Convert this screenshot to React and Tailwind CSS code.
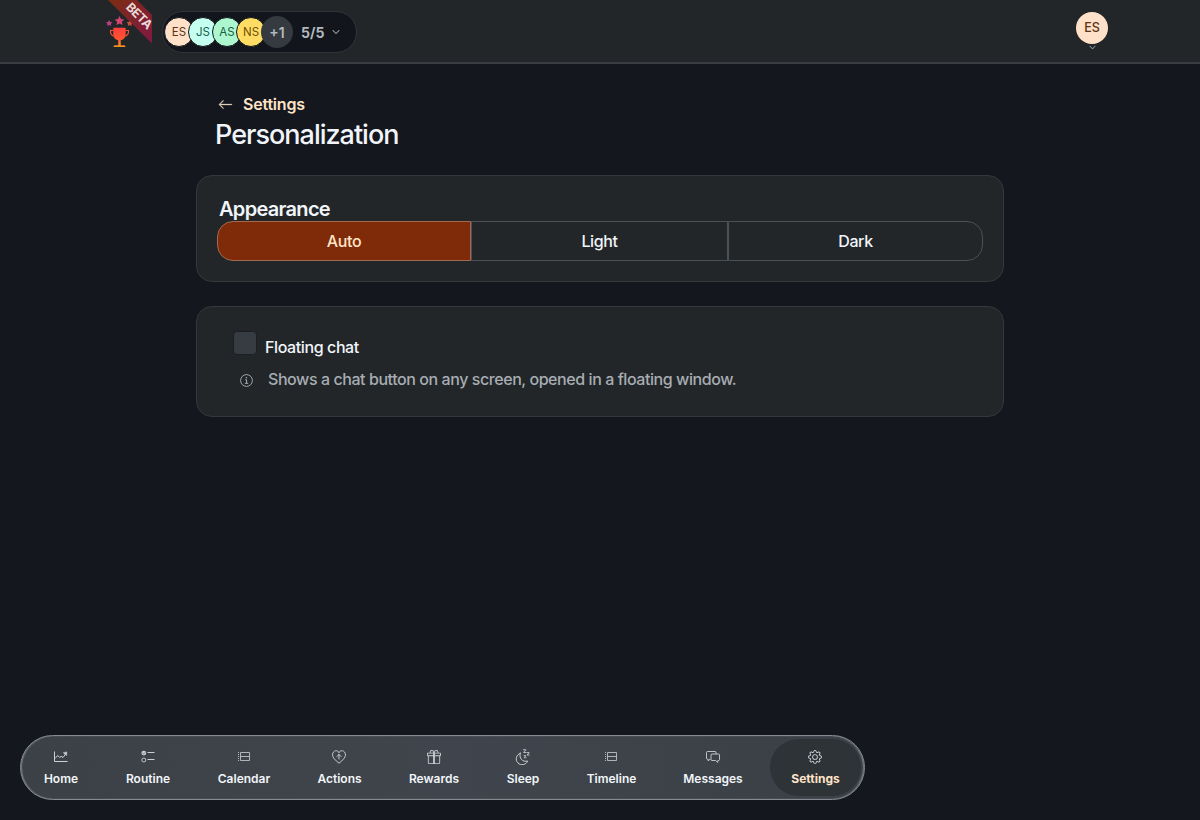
import React, { useState } from 'react';
import { BsArrowLeft, BsGift, BsGear, BsChevronDown } from 'react-icons/bs';

const members = [
  { initials: 'ES', className: 'bg-[#ffe0c8] text-[#5c3210]' },
  { initials: 'JS', className: 'bg-[#c5fff0] text-[#14614f]' },
  { initials: 'AS', className: 'bg-[#adf7d0] text-[#17603e]' },
  { initials: 'NS', className: 'bg-[#ffdd65] text-[#705005]' },
];

const ChartIcon = () => (
  <svg width="14" height="14" viewBox="0 0 14 14" fill="none" stroke="currentColor" strokeLinejoin="round">
    <path d="M.5 1.500v10h13" />
    <path d="M1 8.500l2.700-3 2 2 1.300-1.200L9 7.500l3-4" />
    <path d="M9.300 2.700l3.500-.8-.2 3.700z" fill="currentColor" strokeWidth=".5" />
  </svg>
);

const RoutineIcon = () => (
  <svg width="14" height="14" viewBox="0 0 14 14" fill="none" stroke="currentColor">
    <circle cx="2.8" cy="3.100" r="2.4" fill="currentColor" stroke="none" />
    <path d="M1.700 3.100l.8.800L4 2.400" stroke="#40454c" strokeWidth=".7" />
    <circle cx="2.8" cy="10" r="2" strokeWidth=".9" />
    <path d="M6.500 2.500h7M6.500 9.500h7" />
  </svg>
);

const TimelineIcon = () => (
  <svg width="14" height="14" viewBox="0 0 14 14" fill="none" stroke="currentColor" strokeWidth=".8">
    <path d="M3.500 2.500h9v8h-9zM3.500 6.500h9" />
    <path d="M1.500 2v9" strokeDasharray="1 1" />
  </svg>
);

const HeartIcon = () => (
  <svg width="14" height="14" viewBox="0 0 14 14" fill="none" stroke="currentColor" strokeWidth=".95" strokeLinecap="round" strokeLinejoin="round">
    <path d="M7 2.300C5.700.2 2.900.3 1.500 2c-1.600 2-1 4.500.3 6.200C3.200 10.200 5.200 11.800 7 13.200c1.800-1.400 3.800-3 5.200-5C13.500 6.500 14.100 4 12.500 2 11.100.3 8.300.2 7 2.300z" />
    <path d="M7 9V4.500M4.900 6.500L7 4.400l2.100 2.100" />
  </svg>
);

const SleepIcon = () => (
  <svg width="16" height="16" viewBox="0 0 16 16" fill="none" stroke="currentColor" strokeWidth="1" strokeLinecap="round" strokeLinejoin="round">
    <path d="M5.300 4.200A5.900 5.900 0 1 0 12.600 12c-5 1.500-9-3-7.300-7.800z" />
    <path d="M8.500.7h2.400L8.600 3.500H11M12 3.600h2.200l-2.100 2.400h2.200M9.100 6.600h1.800L9.200 8.700H11" strokeWidth=".85" />
  </svg>
);

const MessagesIcon = () => (
  <svg width="14" height="14" viewBox="0 0 14 14" fill="none" stroke="currentColor" strokeWidth=".9" strokeLinejoin="round">
    <path d="M4.500 9.200H3.800L2.200 11V9.200H1.500A1 1 0 0 1 .5 8.200V2.500a1 1 0 0 1 1-1h7.500a1 1 0 0 1 1 1V4" />
    <path d="M6 4h6.500a1 1 0 0 1 1 1v4.500a1 1 0 0 1-1 1h-.7v2L9.700 10.500H6a1 1 0 0 1-1-1V5a1 1 0 0 1 1-1z" />
  </svg>
);

const InfoIcon = () => (
  <svg className="mt-[3px] mr-[15px] ml-[7px]" width="13" height="13" viewBox="0 0 13 13" fill="none" stroke="currentColor">
    <circle cx="6.500" cy="6.500" r="5.900" strokeWidth=".95" />
    <circle cx="6.400" cy="3.700" r=".8" fill="currentColor" stroke="none" />
    <path d="M5.200 5.800h1.400v3.500M4.900 9.300h3.300" />
  </svg>
);

const navItems = [
  { label: 'Home', icon: ChartIcon, width: 'w-[74px]' },
  { label: 'Routine', icon: RoutineIcon, width: 'w-[84px]' },
  { label: 'Calendar', icon: TimelineIcon, width: 'w-[92px]' },
  { label: 'Actions', icon: HeartIcon, width: 'w-[83px]' },
  { label: 'Rewards', icon: BsGift, width: 'w-[90px]' },
  { label: 'Sleep', icon: SleepIcon, width: 'w-[72px]' },
  { label: 'Timeline', icon: TimelineIcon, width: 'w-[89px]' },
  { label: 'Messages', icon: MessagesIcon, width: 'w-[98px]' },
  { label: 'Settings', icon: BsGear, width: 'w-[91px]' },
];

const Logo = () => (
  <svg width="30" height="34" viewBox="0 0 30 34" fill="none">
    <defs>
      <linearGradient id="cup" x1="0" y1="0" x2="0" y2="1">
        <stop offset="0" stopColor="#ff3f3d" />
        <stop offset=".6" stopColor="#ff542f" />
        <stop offset="1" stopColor="#ee961c" />
      </linearGradient>
    </defs>
    <path d="M14.500 1l1.500 3 3.300.5-2.400 2.300.6 3.300-3-1.600-3 1.600.6-3.300L9.700 4.500l3.300-.5z" fill="#d24571" />
    <path d="M4.200 5l1 2 2.200.3-1.600 1.600.4 2.200-2-1-2 1 .4-2.200L1 7.300 3.200 7z" fill="#be3f83" />
    <path d="M24.800 5l1 2 2.200.3-1.600 1.600.4 2.200-2-1-2 1 .4-2.200-1.600-1.600 2.200-.3z" fill="#c9503f" />
    <path d="M8.500 15.500h-3c-.3 3.500 1.300 5.500 4.500 5.500M20.500 15.500h3c.3 3.500-1.300 5.500-4.500 5.500" stroke="#f9553b" strokeWidth="1.200" />
    <path d="M8.300 13.500c0-.5.300-.8.800-.8h10.800c.5 0 .8.300.8.800v6c0 3-1.900 5.200-4.900 5.700v5h3c1 0 1.700.6 1.700 1.800h-12c0-1.200.7-1.800 1.700-1.800h3v-5c-3-.5-4.900-2.700-4.900-5.700z" fill="url(#cup)" />
  </svg>
);

const Ribbon = () => (
  <svg className="absolute top-0 left-0" width="48" height="44" viewBox="0 0 48 44">
    <defs>
      <linearGradient id="ribbon" x1="0" y1="0" x2="1" y2="1">
        <stop offset="0" stopColor="#7c2d12" />
        <stop offset="1" stopColor="#831843" />
      </linearGradient>
    </defs>
    <path d="M4 0h29l15 15v28.500z" fill="url(#ribbon)" />
  </svg>
);

const Header = () => (
  <header className="flex h-16 shrink-0 items-start border-b-2 border-[#3a3e43] bg-[#222629] pl-[104px]">
    <div className="relative h-[50px] w-12 pt-[15px] pl-px">
      <Logo />
      <Ribbon />
      <span className="absolute top-[10px] left-[19px] flex h-3 w-8 origin-center rotate-45 items-center justify-center text-[12.5px] leading-3 font-bold tracking-[-0.4px] text-[#e9d8d8]">
        BETA
      </span>
    </div>

    {/* Member switcher */}
    <button className="mt-[11px] ml-[10px] flex h-[42px] w-[195px] items-center rounded-full border border-[#30353a] bg-[#12161c] pl-px">
      {members.map((m) => (
        <span
          key={m.initials}
          className={`-mr-[6px] flex size-[30px] shrink-0 items-center justify-center rounded-full border border-[#12161c] pt-px text-[11.5px] ${m.className}`}
        >
          {m.initials}
        </span>
      ))}
      <span className="z-10 ml-px flex size-8 shrink-0 items-center justify-center rounded-full bg-[#343a40] pt-[2px] text-sm font-semibold text-[#b3b9bf]">+1</span>
      <span className="ml-[8px] pt-[2px] text-sm font-bold text-[#b3b9bf]">5/5</span>
      <BsChevronDown className="ml-[8px] size-2 text-[#c3c8cc]" strokeWidth=".6" />
    </button>

    <div className="mt-3 mr-[92px] ml-auto flex flex-col items-center">
      <span className="flex size-8 items-center justify-center rounded-full bg-[#ffe0c8] text-[12.5px] font-medium text-[#5c3210]">ES</span>
      <BsChevronDown className="size-[7px] text-[#9fbcc0]" strokeWidth=".6" />
    </div>
  </header>
);

const App = () => {
  const [appearance, setAppearance] = useState('Auto');
  const [active, setActive] = useState('Settings');

  return (
    <div className="flex h-[820px] flex-col bg-[#14171e] font-['Inter',sans-serif] text-[#f1f5f9]">
      <Header />

      <main className="mx-auto w-[808px] flex-1 pt-[30px]">
        <div className="pl-[20px]">
          <a className="flex h-5 items-center text-base font-semibold tracking-[-0.2px] text-[#ffe4c7]">
            <BsArrowLeft className="mr-[10px] ml-[2px] size-[15px] text-[#dfcdb7]" strokeWidth=".3" />
            Settings
          </a>
          <h1 className="mt-[3px] -ml-px text-[27px] leading-9 font-[450] tracking-[-1px]">Personalization</h1>
        </div>

        <section className="mt-[22px] h-[107px] rounded-2xl border border-[#34393c] bg-[#222629] px-5 pt-[21px]">
          <h2 className="pl-[2px] text-xl leading-6 font-semibold tracking-[-0.7px]">Appearance</h2>
          <div className="grid h-10 grid-cols-[254px_257px_255px] text-base font-[450] tracking-[-0.4px]">
            {['Auto', 'Light', 'Dark'].map((option) => (
              <button
                key={option}
                onClick={() => setAppearance(option)}
                className={`border first:rounded-l-2xl last:rounded-r-2xl ${
                  appearance === option ? 'border-[#a36850] bg-[#7f2b0a] text-[#ffe4c7]' : 'border-[#4b5054]'
                }`}
              >
                {option}
              </button>
            ))}
          </div>
        </section>

        <section className="mt-6 h-[111px] rounded-2xl border border-[#34393c] bg-[#222629] px-9 pt-6">
          <label className="flex h-8 items-start text-base font-[450] tracking-[-0.4px]">
            <span className="size-6 rounded-[4px] border border-[#1b1f23] bg-[#363c41]" />
            <span className="mt-1 ml-2">Floating chat</span>
          </label>
          <p className="mt-1 flex h-6 items-center text-base font-[450] tracking-[-0.43px] text-[#a7adb2]">
            <InfoIcon />
            Shows a chat button on any screen, opened in a floating window.
          </p>
        </section>
      </main>

      {/* Bottom dock */}
      <nav className="relative mb-5 ml-5 flex h-[65px] w-[845px] shrink-0 gap-2 rounded-full border border-[#878b91] bg-linear-to-r from-[#3b4145] via-[#40454d] to-[#3a4046] p-[3px] shadow-[inset_1px_0_1px_#75797d,inset_-1px_0_1px_#75797d]">
        {navItems.map(({ label, icon: Icon, width }) => (
          <button
            key={label}
            onClick={() => setActive(label)}
            className={`flex shrink-0 flex-col items-center rounded-full pt-[10px] text-xs ${width} ${
              active === label ? 'bg-[#2e3338] font-bold text-[#ffe4c7]' : 'font-semibold'
            }`}
          >
            <span className="mr-px flex h-4 items-center text-[14px] text-[#cbd0d5]">
              <Icon />
            </span>
            <span className="mt-[6px] leading-4">{label}</span>
          </button>
        ))}
      </nav>
    </div>
  );
};

export default App;
